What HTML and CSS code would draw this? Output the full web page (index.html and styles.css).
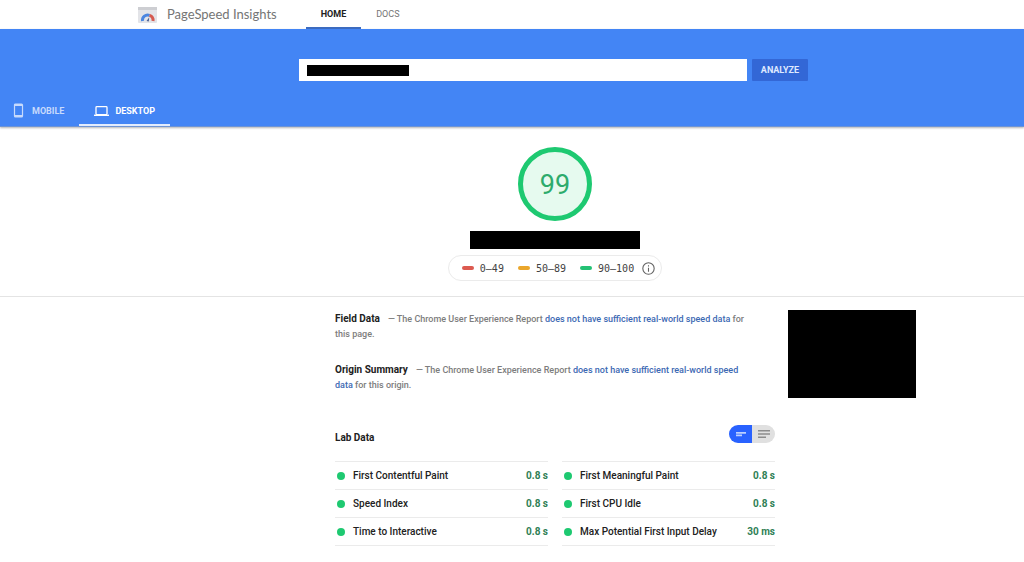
FILE: index.html
```html
<!DOCTYPE html>
<html lang="en">
<head>
<meta charset="utf-8">
<title>PageSpeed Insights</title>
<link rel="stylesheet" href="styles.css">
</head>
<body>
<header class="topbar">
  <svg class="logo" viewBox="0 0 19 16" aria-hidden="true">
    <rect width="19" height="16" rx="1" fill="#e3e4e8"/>
    <rect width="19" height="3" fill="#cdced2"/>
    <path d="M4.500 14A5.200 5.200 0 0 1 11.500 8.400" fill="none" stroke="#4b86e0" stroke-width="3"/>
    <path d="M11.500 8.400A5.200 5.200 0 0 1 15 14" fill="none" stroke="#d65a50" stroke-width="3"/>
    <path d="M8.600 14L11.200 10.200L10.800 14.600z" fill="#4a5f92"/>
  </svg>
  <span class="brand">PageSpeed Insights</span>
  <nav class="nav">
    <a class="nav-link active" href="#home">HOME</a>
    <a class="nav-link" href="#docs">DOCS</a>
  </nav>
</header>

<section class="hero">
  <form class="search">
    <div class="field">
      <input class="url" type="text" aria-label="Web page URL">
      <span class="redacted-url"></span>
    </div>
    <button class="analyze" type="button">ANALYZE</button>
  </form>
  <div class="tabs" role="tablist">
    <button class="tab" type="button" role="tab" aria-selected="false">
      <svg class="tab-icon" viewBox="0 0 15 15" aria-hidden="true"><path fill="none" stroke="currentColor" stroke-width="1.200" d="M4.500 1h6q1 0 1 1v11q0 1-1 1h-6q-1 0-1-1v-11q0-1 1-1z"/><path fill="currentColor" d="M4 1h7v2H4zM4 12h7v2H4z"/></svg>
      MOBILE
    </button>
    <button class="tab selected" type="button" role="tab" aria-selected="true">
      <svg class="tab-icon" viewBox="0 0 15 15" aria-hidden="true"><rect x="2" y="3.600" width="11" height="8" rx=".8" fill="none" stroke="currentColor" stroke-width="1.300"/><path fill="currentColor" d="M0 11.600h15v1.400H0z"/></svg>
      DESKTOP
    </button>
  </div>
</section>

<main>
  <section class="score columns">
    <div class="score-body">
      <div class="gauge">99</div>
      <div class="redacted-title"></div>
      <div class="legend">
        <span class="range fail">0–49</span>
        <span class="range average">50–89</span>
        <span class="range pass">90–100</span>
        <svg class="info" viewBox="0 0 24 24" role="img" aria-label="Information"><circle cx="12" cy="12" r="10.500" fill="none" stroke="#616161" stroke-width="2"/><path fill="#616161" d="M11 10.500h2V18h-2zM11 6h2v2.300h-2z"/></svg>
      </div>
    </div>
  </section>

  <section class="report columns">
    <div class="report-body">
      <p class="summary"><strong>Field Data</strong><span class="dash">—</span> The Chrome User Experience Report <a href="#field">does not have sufficient real-world speed data</a> for this page.</p>
      <p class="summary"><strong>Origin Summary</strong><span class="dash">—</span> The Chrome User Experience Report <a href="#origin">does not have sufficient real-world speed data</a> for this origin.</p>
      <div class="lab-head">
        <h2>Lab Data</h2>
        <div class="toggle">
          <button class="toggle-side on" type="button" aria-label="Compact view"><svg viewBox="0 0 12 10" aria-hidden="true"><path fill="#bcd0ff" d="M1 3h10v1.700H1zM1 5.500h6v1.700H1z"/></svg></button>
          <button class="toggle-side" type="button" aria-label="Detailed view"><svg viewBox="0 0 12 10" aria-hidden="true"><path fill="#8c8c8c" d="M0 1h12v1.400H0zM0 4.300h12v1.400H0zM0 7.600h8v1.400H0z"/></svg></button>
        </div>
      </div>
      <div class="metrics">
        <dl class="metric-list">
          <div class="metric"><dt>First Contentful Paint</dt><dd>0.8 s</dd></div>
          <div class="metric"><dt>Speed Index</dt><dd>0.8 s</dd></div>
          <div class="metric"><dt>Time to Interactive</dt><dd>0.8 s</dd></div>
        </dl>
        <dl class="metric-list">
          <div class="metric"><dt>First Meaningful Paint</dt><dd>0.8 s</dd></div>
          <div class="metric"><dt>First CPU Idle</dt><dd>0.8 s</dd></div>
          <div class="metric"><dt>Max Potential First Input Delay</dt><dd>30 ms</dd></div>
        </dl>
      </div>
    </div>
    <div class="screenshot"></div>
  </section>
</main>
</body>
</html>
```
FILE: styles.css
```css
* { box-sizing: border-box; }
body {
  margin: 0;
  background: #fff;
  color: #212121;
  font-family: Roboto, "Liberation Sans", sans-serif;
  font-size: 10px;
}
button { border: 0; margin: 0; padding: 0; font: inherit; color: inherit; }

.topbar {
  display: flex;
  align-items: center;
  height: 29px;
  padding-left: 138px;
}
.logo { width: 19px; height: 16px; }
.brand { margin-left: 10px; font-family: Lato, sans-serif; font-size: 13px; line-height: 14px; padding-bottom: 2px; white-space: nowrap; color: #757575; }
.nav { display: flex; align-self: stretch; margin-left: 29px; font-size: 9px; }
.nav-link {
  display: flex;
  align-items: center;
  padding: 1px 15px 0;
  border-bottom: 2px solid transparent;
  color: #757575;
  text-decoration: none;
  font-weight: 400;
}
.nav-link.active { color: #212121; border-color: #3c6bc0; font-weight: 700; }

.hero {
  background: #4385f5;
  padding-top: 30px;
  border-bottom: 1px solid #6d94d6;
  box-shadow: 0 1px 2px #0000004d;
}
.search { display: flex; gap: 5px; width: 509px; margin: 0 auto 0 299px; }
.field { position: relative; flex: 1; }
.url { display: block; width: 100%; height: 22px; border: 0; padding: 0 8px; background: #fff; }
.redacted-url { position: absolute; left: 8px; top: 6px; width: 102px; height: 11px; background: #000; }
.analyze { width: 56px; border-radius: 1px; background: #3367d6; color: #dfe9ff; font-size: 9px; font-weight: 700; }
.tabs { display: flex; margin-top: 14px; font-size: 9px; font-weight: 700; }
.tab {
  display: flex;
  align-items: center;
  gap: 6px;
  height: 31px;
  padding: 2px 15px 0 11px;
  border-bottom: 2px solid transparent;
  background: none;
  color: #c7dafc;
}
.tab.selected { padding-left: 15px; color: #fff; border-color: #e3ecfd; }
.tab-icon { width: 15px; height: 15px; }

.columns {
  display: grid;
  grid-template-columns: minmax(0, 335fr) 440px minmax(128px, 249fr);
}
.score { padding: 20px 0 15px; border-bottom: 1px solid #e4e4e4; }
.score-body { grid-column: 2; display: flex; flex-direction: column; align-items: center; }
.gauge {
  display: grid;
  place-items: center;
  width: 74px;
  height: 74px;
  padding-top: 2px;
  border: 5px solid #1ec971;
  border-radius: 50%;
  background: #e6faef;
  color: #2dab6c;
  font-size: 27px;
}
.redacted-title { width: 170px; height: 18px; margin-top: 10px; background: #000; }
.legend {
  display: flex;
  align-items: center;
  gap: 14px;
  height: 26px;
  margin-top: 6px;
  padding: 0 6px 0 13px;
  border: 1px solid #ebebeb;
  border-radius: 13px;
  font-family: "DejaVu Sans Mono", monospace;
  color: #424242;
}
.range { display: flex; align-items: center; gap: 6px; }
.range::before { content: ""; width: 12px; height: 4px; border-radius: 2px; }
.fail::before { background: #dc5a50; }
.average::before { background: #eaa62b; }
.pass::before { background: #24c174; }
.info { width: 13px; height: 13px; margin-left: -6px; }

.report { padding-top: 13px; }
.report-body { grid-column: 2; padding-top: 1px; }
.summary {
  margin: 0 0 20px;
  padding-right: 24px;
  font-size: 9px;
  line-height: 15px;
  font-weight: 500;
  color: #7d7d7d;
}
.summary strong { font-size: 10px; font-weight: 700; color: #212121; }
.summary a { color: #3d69b3; text-decoration: none; }
.dash { margin-left: 8px; }
.screenshot { grid-column: 3; width: 128px; height: 88px; margin-left: 13px; background: #000; }
.lab-head { display: flex; justify-content: space-between; align-items: center; margin-top: 32px; }
.lab-head h2 { margin: 0; padding-top: 6px; font-size: 10px; font-weight: 700; }
.toggle { display: flex; height: 18px; border-radius: 9px; overflow: hidden; }
.toggle-side { display: grid; place-items: center; width: 23px; background: #e0e0e0; }
.toggle-side.on { background: #2962ff; }
.toggle-side svg { width: 12px; height: 10px; }
.metrics { display: grid; grid-template-columns: 1fr 1fr; gap: 14px; margin-top: 18px; }
.metric-list { margin: 0; border-top: 1px solid #ebebeb; }
.metric { display: flex; align-items: center; height: 28px; border-bottom: 1px solid #ebebeb; font-weight: 500; }
.metric::before { content: ""; width: 8px; height: 8px; margin: 0 8px 0 2px; border-radius: 50%; background: #1ec971; }
.metric dt { flex: 1; }
.metric dd { margin: 0; color: #2f8055; font-weight: 700; }
```
